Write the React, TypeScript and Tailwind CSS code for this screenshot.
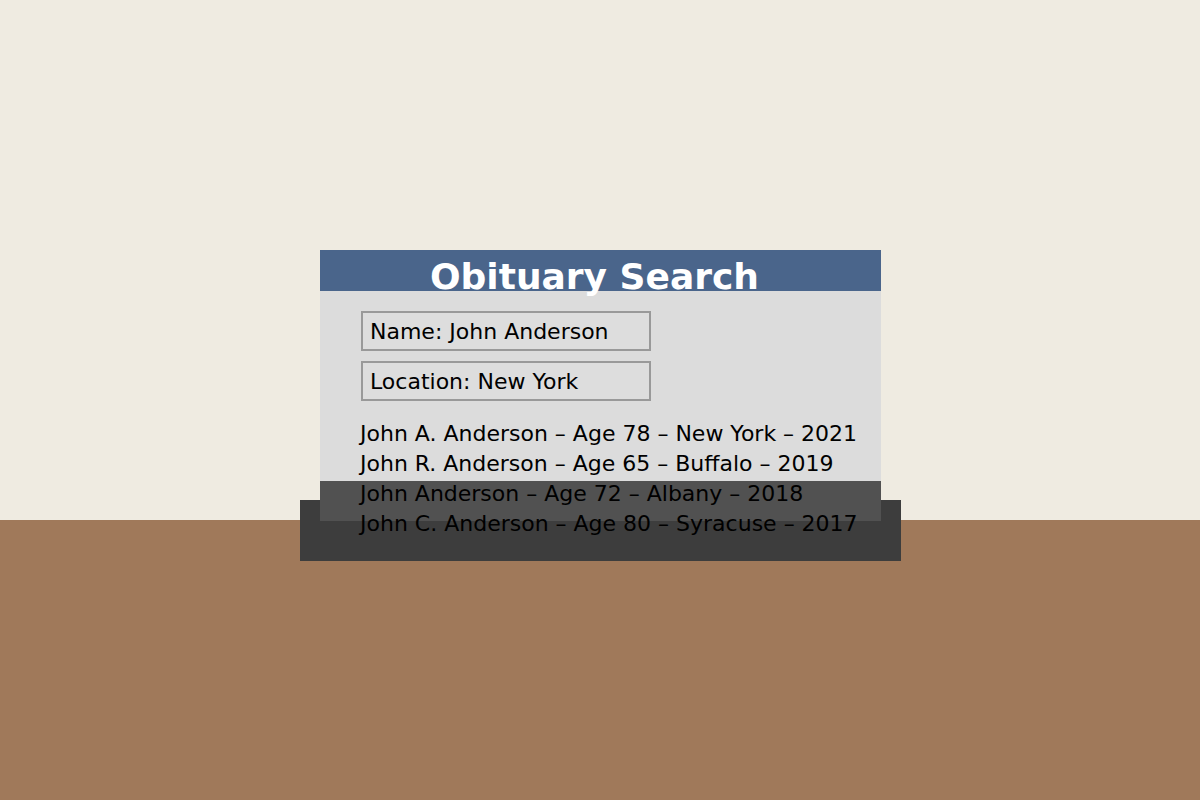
import React from "react";

const results = [
  "John A. Anderson – Age 78 – New York – 2021",
  "John R. Anderson – Age 65 – Buffalo – 2019",
  "John Anderson – Age 72 – Albany – 2018",
  "John C. Anderson – Age 80 – Syracuse – 2017",
];

function Field({ label }: { label: string }) {
  return (
    <div className="w-[290px] h-[40px] border-2 border-[#999999] bg-[#dddddd] pl-[7px] pt-[2px] text-[22px] leading-[34px] text-black whitespace-nowrap">
      {label}
    </div>
  );
}

export default function App() {
  return (
    <div className="relative w-[1200px] h-[800px] flex flex-col overflow-hidden font-['DejaVu_Sans',sans-serif]">
      {/* wall and desk */}
      <div className="h-[520px] bg-[#efebe1]" />
      <div className="flex-1 bg-[#a0795a]" />

      {/* monitor on the desk */}
      <div className="absolute left-[300px] top-[250px] w-[601px] h-[311px]">
        <div className="absolute left-0 right-0 bottom-0 h-[61px] bg-[#3d3d3d]" />
        <div className="relative ml-[20px] w-[561px] h-[271px] bg-[#dcdcdc]">
          <div className="absolute left-0 right-0 bottom-0 h-[40px] bg-[#515151]" />
          <div className="relative z-10 flex flex-col">
            <div className="h-[41px] bg-[#4a658b] pl-[110px]">
              <div className="mt-[9px] text-[36px] leading-none font-bold text-white whitespace-nowrap">
                Obituary Search
              </div>
            </div>
            <div className="flex flex-col gap-[10px] pl-[41px] pt-[20px]">
              <Field label="Name: John Anderson" />
              <Field label="Location: New York" />
            </div>
            <div className="flex flex-col pl-[40px] mt-[18px] text-[22px] leading-[30px] text-black">
              {results.map((r) => (
                <div key={r} className="whitespace-nowrap">
                  {r}
                </div>
              ))}
            </div>
          </div>
        </div>
      </div>
    </div>
  );
}
